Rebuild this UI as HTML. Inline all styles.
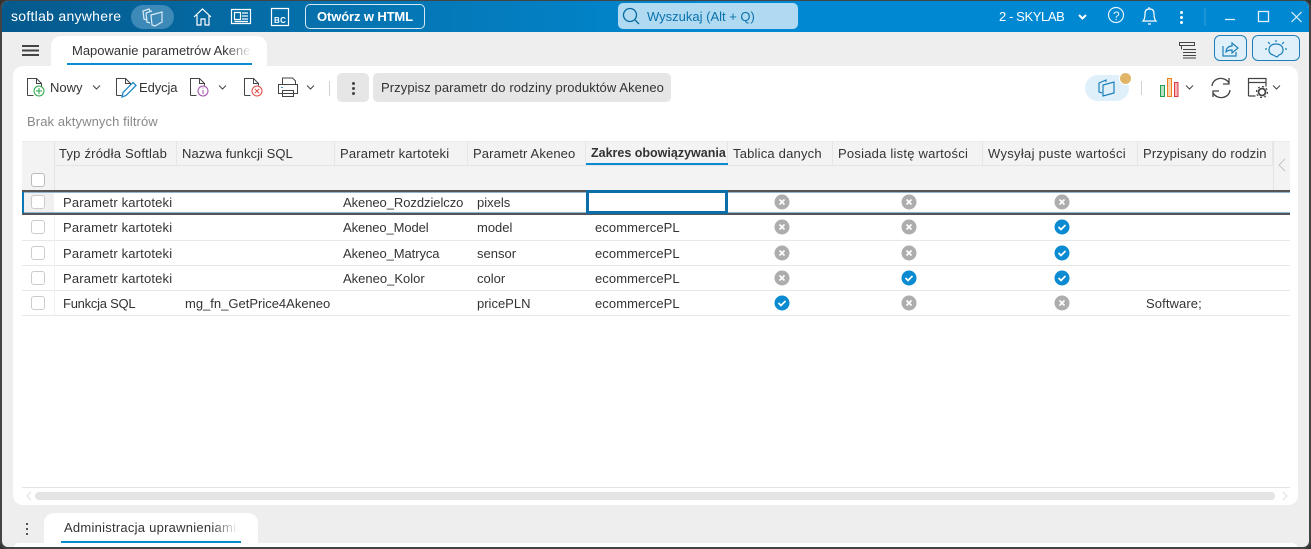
<!DOCTYPE html>
<html lang="pl"><head><meta charset="utf-8"><title>softlab anywhere</title>
<style>
html,body{margin:0;padding:0;width:1311px;height:549px;overflow:hidden;background:#333}
*{box-sizing:border-box}
#w{position:absolute;left:0;top:0;width:1311px;height:549px;background:#eee;border-radius:8px;overflow:hidden;font:13px/16px "Liberation Sans",sans-serif;color:#333;border:1px solid #444;border-width:1px 2px 2px 2px}
#in{position:absolute;left:-2px;top:-1px;width:1311px;height:549px}
.t{position:absolute;white-space:nowrap;line-height:16px}
.a{position:absolute}
svg{position:absolute;overflow:visible;fill:none}
.hc{position:absolute;top:141px;height:25px;border-right:1px solid #e6e6e6;padding:5px 0 0 5px;white-space:nowrap;overflow:hidden;line-height:16px;color:#333}
.cb{position:absolute;left:31px;width:14px;height:14px;border:1px solid #bbb;border-radius:3px;background:#fff}
.ln{position:absolute;left:22px;width:1268px;height:1px;background:#e8e8e8}
</style></head><body>
<div id="w"><div id="in">
<div class="a" style="left:0;top:0;width:1311px;height:32px;background:linear-gradient(90deg,#05598c 0,#0576b4 30%,#0089d2 55%,#0089d2 100%)"></div>

<div class="t" style="left:11px;top:8px;color:#fff;font-size:14px;letter-spacing:.28px">softlab anywhere</div>
<div class="a" style="left:131px;top:5px;width:43px;height:24px;border-radius:12px;background:#3d89b8"></div>
<div class="a" style="left:618px;top:3px;width:180px;height:26px;background:#afdaf1;border-radius:5px"></div>
<svg style="left:0;top:0" width="1311" height="32" stroke="#d8ebf6" stroke-width="1.2">
<path d="M147 20l-3-1-1-8 6-2 1 2M150 23l-3-1-1-9 6-2M155 26l-3-1-1-10 11-3v10z"/>
<path d="M194 17l8.500-8 8.500 8M197 15v10h4v-6h4v6h4v-10" stroke="#fff"/>
<path d="M231.500 9.500h19v14h-19zM234.500 12.500h6v7h-6zM242 13h6M242 16h6M242 19h6M234.500 21.500h13.500" stroke="#fff"/>
<path d="M271.500 8.500h17v17h-17z" stroke="#fff"/>
<circle cx="630" cy="15" r="6.500" stroke="#06699f" stroke-width="1.300"/><path d="M635 20l4 4" stroke="#06699f" stroke-width="1.300"/>
<path d="M1079 15l3.500 3.500 3.500-3.500" stroke="#fff" stroke-width="2"/>
<circle cx="1116" cy="15" r="7.500" stroke="#e4f2fa"/>
<path d="M1149 9c-3 0-4 2-4 5 0 4-1 6-2 7h13c-1-1-2-3-2-7 0-3-1-5-4-5zM1149 7v2M1148 24h3" stroke="#fff"/>
<path d="M1205 8v18" stroke="#2b9ed8"/>
<path d="M1225 19.500h10" stroke="#e4f2fa" stroke-width="1.300"/>
<path d="M1258.500 11.500h10v10h-10z" stroke="#e4f2fa" stroke-width="1.300"/>
<path d="M1291.500 12l10 10M1301.500 12l-10 10" stroke="#e4f2fa" stroke-width="1.200"/>
</svg>
<div class="t" style="left:1113px;top:8px;color:#e4f2fa;font-size:12px">?</div>
<div class="t" style="left:274px;top:13px;font-size:8px;font-weight:bold;color:#fff;letter-spacing:.3px">BC</div>
<div class="t" style="left:305px;top:4px;width:120px;height:25px;border:1px solid #d5e9f5;border-radius:5px;color:#fff;font-weight:bold;text-align:center;line-height:23px;font-size:13px;letter-spacing:-.12px">Otwórz w HTML</div>
<div class="t" style="left:647px;top:9px;color:#0a72ab">Wyszukaj (Alt + Q)</div>
<div class="a" style="left:1180px;top:11px;width:3px;height:3px;background:#fff;border-radius:50%;box-shadow:0 5px #fff,0 10px #fff"></div>
<div class="t" style="left:999px;top:9px;color:#fff;font-size:13px;letter-spacing:-.4px">2 - SKYLAB</div>

<div class="a" style="left:51px;top:36px;width:216px;height:40px;background:#fff;border-radius:10px 10px 0 0"></div>
<div class="t" style="left:72px;top:43px;width:180px;overflow:hidden;-webkit-mask-image:linear-gradient(90deg,#000 85%,transparent);">Mapowanie parametrów Akeneo</div>
<div class="a" style="left:67px;top:63px;width:185px;height:2px;background:#0a8ad0"></div>
<div class="a" style="left:22px;top:45px;width:17px;height:2px;background:#444;box-shadow:0 4.500px #444,0 9px #444"></div>

<div class="a" style="left:13px;top:66px;width:1285px;height:439px;background:#fff;border-radius:10px"></div>

<svg style="left:0;top:0" width="1311" height="120" stroke="#444" stroke-width="1">
<path d="M1179.500 42.500h15v3h-15zM1181.500 45.500v4M1183 49.500h13M1183 52.500h13M1183 55.500h13M1183 58h13"/>
<path d="M27.500 95.500v-17h9l5 5v3M36.500 78.500v5h5M27.500 95.500h6"/>
<circle cx="39" cy="91" r="5" stroke="#28a745"/><path d="M39 88v6M36 91h6" stroke="#28a745"/>
<path d="M116.500 95.500v-17h9l5 5v2M125.500 78.500v5h5M116.500 95.500h5"/>
<path d="M122 97l1-4.500 10-10 3 3-10 10z" stroke="#1e88c9" stroke-width="1.300"/>
<path d="M190.500 95.500v-17h9l5 5v2M199.500 78.500v5h5M190.500 95.500h6"/>
<circle cx="203" cy="91" r="5" stroke="#a64ab0"/><path d="M203 90v4M203 87.500v1" stroke="#a64ab0"/>
<path d="M244.500 95.500v-17h9l5 5v2M253.500 78.500v5h5M244.500 95.500h6"/>
<circle cx="257" cy="91" r="5" stroke="#e0463f"/><path d="M254.800 88.800l4.400 4.400M259.200 88.800l-4.400 4.400" stroke="#e0463f"/>
<path d="M282.500 84v-6h10l3 3v3M278.500 84.500h19v9h-19zM282.500 90.500h11v6h-11z"/><path d="M281 87.500h2" stroke="#3a97d4"/>
<path d="M93 85.500l3.500 3.500 3.500-3.500M219 85.500l3.500 3.500 3.500-3.500M307 85.500l3.500 3.500 3.500-3.500M1186 85.500l3.500 3.500 3.500-3.500M1273 85.500l3.500 3.500 3.500-3.500"/>
<path d="M329.500 81v15M1141.500 81v14" stroke="#d0d0d0"/>
<path d="M1160.500 85.500h4v11h-4z" stroke="#21a150" fill="#b8e0c4"/><path d="M1167.500 78.500h4v18h-4z" stroke="#ee7f22" fill="#fbd5b0"/><path d="M1174.500 82.500h3.500v14h-3.500z" stroke="#dc3c45" fill="#f5b5b8"/>
<path d="M1212 86c1-9 13-10 17-3M1229 78v6h-6M1230 90c-1 9-13 10-17 3M1213 97v-6h6" stroke-width="1.300"/>
<path d="M1248.500 96v-17.500h17.500v8M1248.500 82.500h17.500M1248.500 96h7" stroke-width="1.200"/><circle cx="1262" cy="92" r="3.500" stroke-width="1.800"/><circle cx="1262" cy="92" r="5.500" stroke-width="1.200" stroke-dasharray="2 2.300"/>
</svg>
<div class="t" style="left:50px;top:80px">Nowy</div>
<div class="t" style="left:139px;top:80px;letter-spacing:-.1px">Edycja</div>
<div class="a" style="left:337px;top:73px;width:32px;height:29px;background:#e6e6e6;border-radius:5px"></div>
<div class="a" style="left:352px;top:82px;width:3px;height:3px;background:#444;border-radius:50%;box-shadow:0 5px #444,0 10px #444"></div>
<div class="t" style="left:373px;top:73px;width:298px;height:29px;background:#e6e6e6;border-radius:5px;padding-left:8px;line-height:29px;letter-spacing:.09px">Przypisz parametr do rodziny produktów Akeneo</div>
<div class="a" style="left:1085px;top:75px;width:44px;height:26px;background:#e0f0fa;border-radius:13px"></div>
<svg style="left:0;top:0" width="1311" height="120" stroke="#1c7fb8" stroke-width="1.200">
<path d="M1102 93l-3-1v-9l7-3v2M1103 85l11-3v11l-11 3z"/>
</svg>
<div class="a" style="left:1120px;top:73px;width:11px;height:11px;background:#e0b567;border-radius:50%;box-shadow:0 0 0 1px #fff"></div>
<div class="a" style="left:1214px;top:35px;width:33px;height:26px;background:#dff0fa;border:1px solid #1c7fb8;border-radius:6px"></div>
<div class="a" style="left:1252px;top:35px;width:48px;height:26px;background:#dff0fa;border:1px solid #1c7fb8;border-radius:6px"></div>
<svg style="left:0;top:0" width="1311" height="70" stroke="#1c7fb8" stroke-width="1.200">
<path d="M1223 46v10h13v-4M1226 52c0-4 3-6 6-6v-3l6 5-6 5v-3c-3 0-5 1-6 2z"/>
<path d="M1273 55c-3-1-4-3-4-5 0-4 3-6 7-6s7 2 7 6c0 2-1 4-4 5l-2 2z"/><path d="M1276 40v2M1268 42l2 2M1284 42l-2 2M1265 49h2M1285 49h2"/>
</svg>

<div class="t" style="left:27px;top:114px;color:#888;letter-spacing:.1px">Brak aktywnych filtrów</div>

<!-- grid -->
<div class="a" style="left:22px;top:141px;width:1268px;height:49px;background:#f3f3f3"></div>
<div class="a" style="left:22px;top:141px;width:1268px;height:1px;background:#ebebeb"></div>
<div class="a" style="left:54px;top:165px;width:1219px;height:1px;background:#e4e4e4"></div>
<div class="a" style="left:54px;top:141px;width:1px;height:49px;background:#e4e4e4"></div>
<div class="a" style="left:1273px;top:141px;width:1px;height:49px;background:#e4e4e4"></div>
<div class="hc" style="left:54px;width:123px;letter-spacing:.22px">Typ źródła Softlab</div>
<div class="hc" style="left:177px;width:158px;letter-spacing:.06px">Nazwa funkcji SQL</div>
<div class="hc" style="left:335px;width:133px;letter-spacing:.17px">Parametr kartoteki</div>
<div class="hc" style="left:468px;width:118px;letter-spacing:.13px">Parametr Akeneo</div>
<div class="hc" style="left:586px;width:142px;font-weight:bold;padding-top:4px;font-size:12.500px">Zakres obowiązywania</div>
<div class="a" style="left:586px;top:163px;width:142px;height:2px;background:#0a8ad0"></div>
<div class="hc" style="left:728px;width:105px;letter-spacing:.2px">Tablica danych</div>
<div class="hc" style="left:833px;width:150px;letter-spacing:.23px">Posiada listę wartości</div>
<div class="hc" style="left:983px;width:155px;letter-spacing:.3px">Wysyłaj puste wartości</div>
<div class="hc" style="left:1138px;width:135px;letter-spacing:.15px">Przypisany do rodzin</div>
<svg style="left:0;top:0" width="1311" height="180" stroke="#c4c4c4"><path d="M1285 159l-6 6 6 6"/></svg>
<div class="cb" style="top:173px"></div>

<div class="a" style="left:22px;top:192px;width:32px;height:21px;background:#f0f0f0"></div>
<div class="a" style="left:22px;top:190px;width:1268px;height:2px;background:#555"></div>
<div class="a" style="left:22px;top:192px;width:1268px;height:1px;background:#8fb6cf"></div>
<div class="a" style="left:22px;top:213px;width:1268px;height:2px;background:#555"></div>
<div class="a" style="left:22px;top:212px;width:1268px;height:1px;background:#8fb6cf"></div>
<div class="a" style="left:22px;top:192px;width:2px;height:21px;background:#0a78b5"></div>
<div class="a" style="left:586px;top:190px;width:142px;height:24px;border:3px solid #0a6fa8;background:#fff"></div>
<div class="ln" style="top:240px"></div><div class="ln" style="top:265px"></div><div class="ln" style="top:290px"></div><div class="ln" style="top:315px"></div>
<div class="a" style="left:54px;top:215px;width:1px;height:100px;background:#f0f0f0"></div>

<div class="cb" style="top:195px;border-color:#ccc"></div>
<div class="cb" style="top:220px;border-color:#ccc"></div>
<div class="cb" style="top:246px;border-color:#ccc"></div>
<div class="cb" style="top:271px;border-color:#ccc"></div>
<div class="cb" style="top:296px;border-color:#ccc"></div>

<div class="t" style="left:63px;top:195px;letter-spacing:.17px">Parametr kartoteki</div>
<div class="t" style="left:343px;top:195px;letter-spacing:-.06px">Akeneo_Rozdzielczo</div>
<div class="t" style="left:477px;top:195px">pixels</div>
<div class="t" style="left:63px;top:220px;letter-spacing:.17px">Parametr kartoteki</div>
<div class="t" style="left:343px;top:220px;letter-spacing:-.1px">Akeneo_Model</div>
<div class="t" style="left:477px;top:220px">model</div>
<div class="t" style="left:595px;top:220px;letter-spacing:.08px">ecommercePL</div>
<div class="t" style="left:63px;top:246px;letter-spacing:.17px">Parametr kartoteki</div>
<div class="t" style="left:343px;top:246px;letter-spacing:-.08px">Akeneo_Matryca</div>
<div class="t" style="left:477px;top:246px">sensor</div>
<div class="t" style="left:595px;top:246px;letter-spacing:.08px">ecommercePL</div>
<div class="t" style="left:63px;top:271px;letter-spacing:.17px">Parametr kartoteki</div>
<div class="t" style="left:343px;top:271px">Akeneo_Kolor</div>
<div class="t" style="left:477px;top:271px">color</div>
<div class="t" style="left:595px;top:271px;letter-spacing:.08px">ecommercePL</div>
<div class="t" style="left:63px;top:296px;letter-spacing:-.25px">Funkcja SQL</div>
<div class="t" style="left:185px;top:296px">mg_fn_GetPrice4Akeneo</div>
<div class="t" style="left:477px;top:296px">pricePLN</div>
<div class="t" style="left:595px;top:296px;letter-spacing:.08px">ecommercePL</div>
<div class="t" style="left:1146px;top:296px;letter-spacing:.1px">Software;</div>

<svg style="left:0;top:0" width="1311" height="330">
<defs>
<g id="x"><circle r="7.500" fill="#adadad"/><path d="M-2.500-2.500l5 5M2.500-2.500l-5 5" stroke="#fff" stroke-width="1.600"/></g>
<g id="c"><circle r="7.500" fill="#0a8ad0"/><path d="M-3.500 0l2.500 2.500 4.500-4.500" stroke="#fff" stroke-width="1.700"/></g>
</defs>
<use href="#x" x="782" y="202"/><use href="#x" x="909" y="202"/><use href="#x" x="1062" y="202"/>
<use href="#x" x="782" y="227"/><use href="#x" x="909" y="227"/><use href="#c" x="1062" y="227"/>
<use href="#x" x="782" y="253"/><use href="#x" x="909" y="253"/><use href="#c" x="1062" y="253"/>
<use href="#x" x="782" y="278"/><use href="#c" x="909" y="278"/><use href="#c" x="1062" y="278"/>
<use href="#c" x="782" y="303"/><use href="#x" x="909" y="303"/><use href="#x" x="1062" y="303"/>
</svg>

<div class="a" style="left:22px;top:487px;width:1268px;height:1px;background:#e4e4e4"></div>
<div class="a" style="left:35px;top:492px;width:1240px;height:8px;background:#e4e4e4;border-radius:4px"></div>
<svg style="left:0;top:480px" width="1311" height="30" stroke="#e0e0e0"><path d="M31 12l-4 4 4 4M1283 12l4 4-4 4"/></svg>

<div class="a" style="left:13px;top:543px;width:1285px;height:6px;background:#fff;border-radius:8px 8px 0 0"></div>
<div class="a" style="left:44px;top:513px;width:214px;height:36px;background:#fff;border-radius:10px 10px 0 0"></div>
<div class="t" style="left:64px;top:520px;width:174px;overflow:hidden;letter-spacing:.25px;-webkit-mask-image:linear-gradient(90deg,#000 85%,transparent)">Administracja uprawnieniami</div>
<div class="a" style="left:61px;top:541px;width:180px;height:2px;background:#0a8ad0"></div>
<div class="a" style="left:26px;top:523px;width:2px;height:2px;background:#555;box-shadow:0 5px #555,0 10px #555"></div>
</div></div>
</body></html>
